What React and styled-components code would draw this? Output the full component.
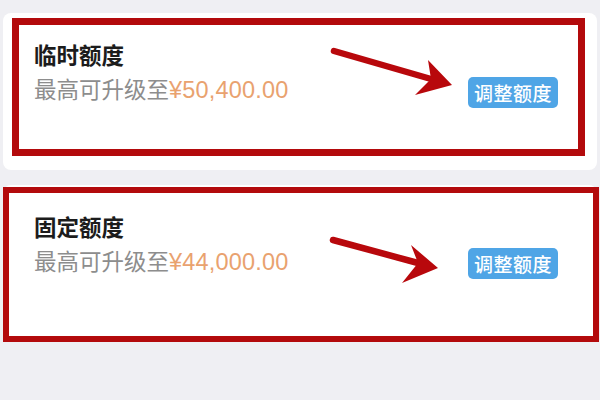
import styled, { createGlobalStyle } from "styled-components";

const GlobalStyle = createGlobalStyle`
    html, body {
        margin: 0;
        padding: 0;
        background-color: #efeff3;
    }
    body {
        font-family: "Liberation Sans", "Noto Sans CJK SC", sans-serif;
    }
`;

const Page = styled.div`
    width: 600px;
    height: 400px;
    box-sizing: border-box;
    padding: 13px 3px 0 3px;
    display: flex;
    flex-direction: column;
    gap: 15px;
    overflow: hidden;
`;

const Card = styled.section`
    position: relative;
    height: 157px;
    box-sizing: border-box;
    background-color: #ffffff;
    border-radius: 8px;
    padding: 29px 39px 0 31px;
    display: flex;
    flex-direction: row;
    justify-content: space-between;
    align-items: flex-start;
`;

const Info = styled.div`
    display: flex;
    flex-direction: column;
`;

const Title = styled.h3`
    margin: 0;
    font-size: 22.5px;
    line-height: 30px;
    font-weight: 700;
    color: #1c1c1c;
`;

const Limit = styled.p`
    margin: 2px 0 0 0;
    font-size: 22.5px;
    line-height: 32px;
    color: #8d8d8d;
    span {
        color: #e9a26f;
        font-size: 23.5px;
        letter-spacing: 0.2px;
    }
`;

const AdjustButton = styled.button`
    margin-top: ${(p) => p.$offset}px;
    width: 90px;
    height: 31px;
    padding: 0;
    border: none;
    border-radius: 5px;
    background-color: #4fa5e6;
    color: #ffffff;
    font-family: "Noto Sans CJK SC", sans-serif;
    font-size: 19px;
    font-weight: 500;
    line-height: 31px;
    letter-spacing: 0.5px;
`;

// red marker frame drawn over the card
const Frame = styled.div`
    position: absolute;
    top: ${(p) => p.$inset[0]}px;
    right: ${(p) => p.$inset[1]}px;
    bottom: ${(p) => p.$inset[2]}px;
    left: ${(p) => p.$inset[3]}px;
    border: ${(p) => p.$width}px solid #b30a0c;
    pointer-events: none;
`;

const Overlay = styled.svg`
    position: absolute;
    left: 0;
    top: 0;
    width: 100%;
    height: 100%;
    pointer-events: none;
    overflow: visible;
`;

function Arrow({ tail, tip, upper, lower, notch }) {
    const head = [tip, upper, notch, lower].map((pt) => pt.join(",")).join(" ");
    return (
        <Overlay>
            <line
                x1={tail[0]}
                y1={tail[1]}
                x2={notch[0]}
                y2={notch[1]}
                stroke="#b8080c"
                strokeWidth="6.5"
                strokeLinecap="round"
            />
            <polygon points={head} fill="#b8080c" />
        </Overlay>
    );
}

const quotas = [
    {
        title: "临时额度",
        amount: "¥50,400.00",
        button: 35,
        frame: { inset: [5, 12, 14, 9], width: 7 },
        arrow: {
            tail: [331, 38],
            tip: [449, 72],
            upper: [425, 47],
            lower: [412, 82],
            notch: [428, 66],
        },
    },
    {
        title: "固定额度",
        amount: "¥44,000.00",
        button: 34,
        frame: { inset: [2, -2, 0, 0], width: 6 },
        arrow: {
            tail: [330, 55],
            tip: [435, 83],
            upper: [408, 60],
            lower: [399, 98],
            notch: [415, 78],
        },
    },
];

function QuotaCard({ quota }) {
    return (
        <Card>
            <Info>
                <Title>{quota.title}</Title>
                <Limit>
                    最高可升级至<span>{quota.amount}</span>
                </Limit>
            </Info>
            <AdjustButton $offset={quota.button}>调整额度</AdjustButton>
            <Arrow {...quota.arrow} />
            <Frame $inset={quota.frame.inset} $width={quota.frame.width} />
        </Card>
    );
}

export default function App() {
    return (
        <>
            <GlobalStyle />
            <Page>
                {quotas.map((q) => (
                    <QuotaCard key={q.title} quota={q} />
                ))}
            </Page>
        </>
    );
}
